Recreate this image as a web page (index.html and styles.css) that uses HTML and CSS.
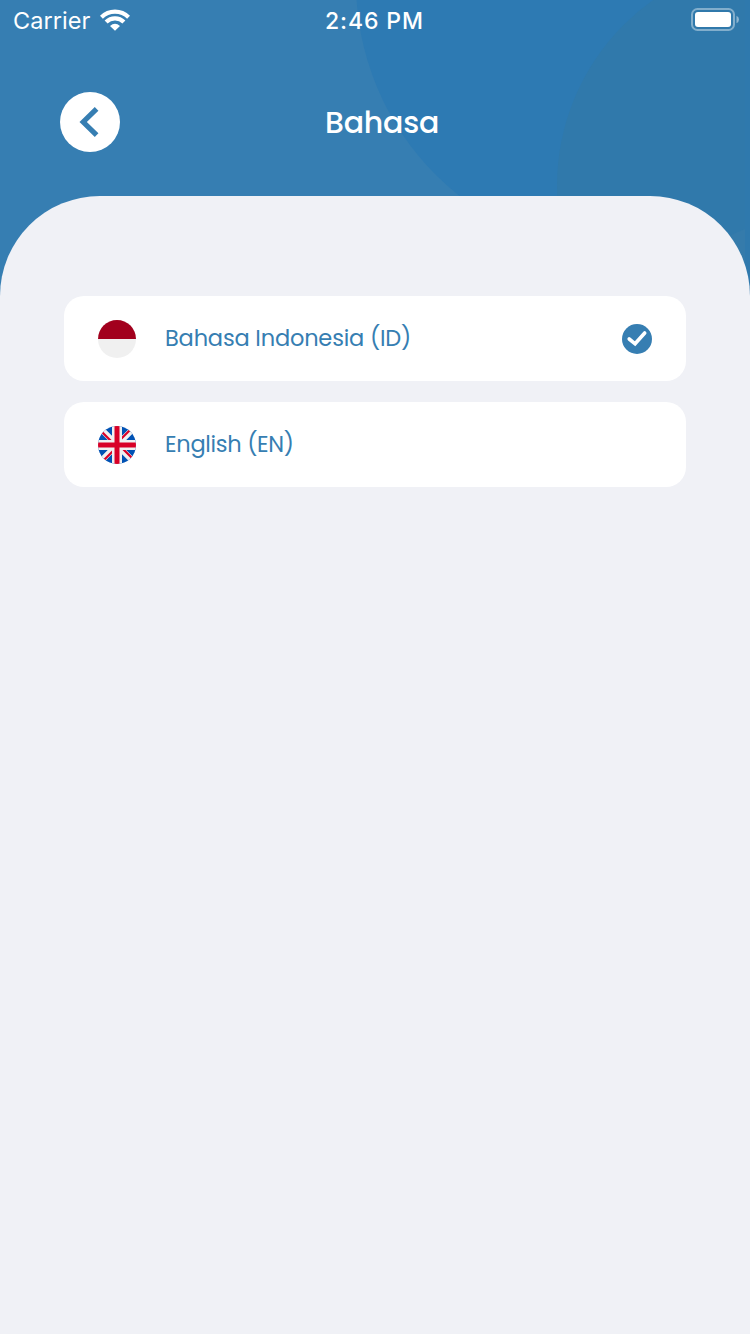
FILE: index.html
```html
<!DOCTYPE html>
<html lang="id">
<head>
<meta charset="utf-8">
<title>Bahasa</title>
<link rel="stylesheet" href="styles.css">
</head>
<body>
<div class="screen">
  <svg class="backdrop" width="750" height="300" viewBox="0 0 750 300" aria-hidden="true">
    <defs><clipPath id="art"><rect width="745" height="300"/></clipPath></defs>
    <rect width="750" height="300" fill="#367eb2"/>
    <circle cx="629" cy="-18" r="273" fill="#2d7ab3"/>
    <g clip-path="url(#art)">
      <circle cx="784" cy="185.5" r="227" fill="#3079ab"/>
      <path d="M725 238Q735 233 745 229V300H725Z" fill="#357bab"/>
    </g>
    <path d="M745 0H750V300H745Z" fill="#2f79ad"/>
  </svg>
  <div class="status">
    <div class="status-left">
      <span class="carrier">Carrier</span>
      <svg class="wifi" width="30" height="22" viewBox="0 0 30 22" aria-hidden="true">
        <g fill="none" stroke="#fff" stroke-width="4.2">
          <path d="M1.4 8.2Q7 2.6 15 2.6T28.6 8.2"/>
          <path d="M6.1 13Q9.8 9.3 15 9.3T23.9 13"/>
        </g>
        <path d="M10 16.9Q15 12.7 20 16.9L15 21.8Z" fill="#fff"/>
      </svg>
    </div>
    <span class="time">2:46 PM</span>
    <svg class="battery" width="50" height="24" viewBox="0 0 50 24" aria-hidden="true">
      <rect x="2" y="1" width="42" height="21" rx="5.5" fill="none" stroke="#fff" stroke-opacity=".4" stroke-width="2"/>
      <rect x="5" y="4" width="36" height="15" rx="3" fill="#fff"/>
      <path d="M46.5 7.8Q49 9 49 11.5T46.5 15.2Z" fill="#fff" fill-opacity=".45"/>
    </svg>
  </div>
  <header class="nav">
    <button class="back" aria-label="Kembali">
      <svg width="60" height="60" viewBox="0 0 60 60" aria-hidden="true"><path d="M36.6 16.8L23.2 30L36.6 43.2" fill="none" stroke="#367eb2" stroke-width="5.2"/></svg>
    </button>
    <h1 class="title">Bahasa</h1>
  </header>
  <main class="sheet">
    <div class="option">
      <svg class="flag" width="38" height="38" viewBox="0 0 38 38" aria-hidden="true">
        <circle cx="19" cy="19" r="19" fill="#f0f0f0"/>
        <path d="M0 19A19 19 0 0 1 38 19Z" fill="#a2001d"/>
      </svg>
      <span class="label">Bahasa Indonesia (ID)</span>
      <svg class="check" width="30" height="30" viewBox="0 0 30 30" aria-hidden="true">
        <circle cx="15" cy="15" r="15" fill="#367eb2"/>
        <path d="M7.2 15L13.1 19.8L22.7 9" fill="none" stroke="#fff" stroke-width="3.6" stroke-linecap="round"/>
      </svg>
    </div>
    <div class="option">
      <svg class="flag" width="38" height="38" viewBox="0 0 38 38" aria-hidden="true">
        <defs><clipPath id="round"><circle cx="19" cy="19" r="19"/></clipPath></defs>
        <g clip-path="url(#round)">
          <rect width="38" height="38" fill="#0052b4"/>
          <path d="M0 0L38 38M38 0L0 38" stroke="#f0f0f0" stroke-width="6"/>
          <path d="M4.5 6.5L15 17M33.5 31.5L23 21M31.5 4.5L21 15M6.5 33.5L17 23" stroke="#d80027" stroke-width="2.2"/>
          <path d="M19 0V38M0 19H38" stroke="#f0f0f0" stroke-width="10"/>
          <path d="M19 0V38M0 19H38" stroke="#d80027" stroke-width="5"/>
        </g>
      </svg>
      <span class="label label-short">English (EN)</span>
    </div>
  </main>
</div>
</body>
</html>
```
FILE: styles.css
```css
* {
  box-sizing: border-box;
}

body {
  margin: 0;
  background: #f0f1f6;
  font-family: Poppins, Inter, "Liberation Sans", sans-serif;
}

.screen {
  position: relative;
  display: flex;
  flex-direction: column;
  width: 750px;
  height: 1334px;
  overflow: hidden;
}

.backdrop {
  position: absolute;
  top: 0;
  left: 0;
  z-index: -1;
}

.status {
  display: grid;
  grid-template-columns: 1fr auto 1fr;
  align-items: center;
  height: 40px;
  padding: 0 10px 0 13px;
  color: #fff;
  font-family: Inter, sans-serif;
  line-height: 38px;
}

.status-left {
  display: flex;
  align-items: center;
  gap: 10px;
}

.carrier {
  width: 77px;
  padding-top: 2px;
  font-size: 23.5px;
  letter-spacing: 0.05px;
  white-space: nowrap;
}

.time {
  width: 103px;
  padding-top: 2px;
  font-size: 23px;
  font-weight: 500;
  letter-spacing: 0.9px;
  white-space: nowrap;
}

.battery {
  justify-self: end;
}

.nav {
  display: grid;
  grid-template-columns: 265px 1fr;
  align-items: center;
  height: 156px;
  padding: 8px 60px 0;
}

.back {
  width: 60px;
  height: 60px;
  padding: 0;
  border: 0;
  border-radius: 50%;
  background: #fff;
}

.back svg {
  display: block;
}

.title {
  margin: 0;
  padding-top: 1px;
  color: #fff;
  font-size: 30px;
  font-weight: 500;
  letter-spacing: -0.2px;
  line-height: 40px;
}

.sheet {
  display: flex;
  flex: 1;
  flex-direction: column;
  gap: 21px;
  padding: 100px 64px 0;
  border-radius: 100px 100px 0 0;
  background: #f0f1f6;
}

.option {
  display: flex;
  align-items: center;
  height: 85px;
  padding: 0 34px;
  border-radius: 20px;
  background: #fff;
}

.flag {
  flex: none;
  margin-right: 29px;
}

.label {
  padding-bottom: 2px;
  color: #367eb2;
  font-size: 22.5px;
  letter-spacing: -0.18px;
  line-height: 34px;
  white-space: nowrap;
}

.label-short {
  letter-spacing: -0.28px;
}

.check {
  margin-left: auto;
}
```
